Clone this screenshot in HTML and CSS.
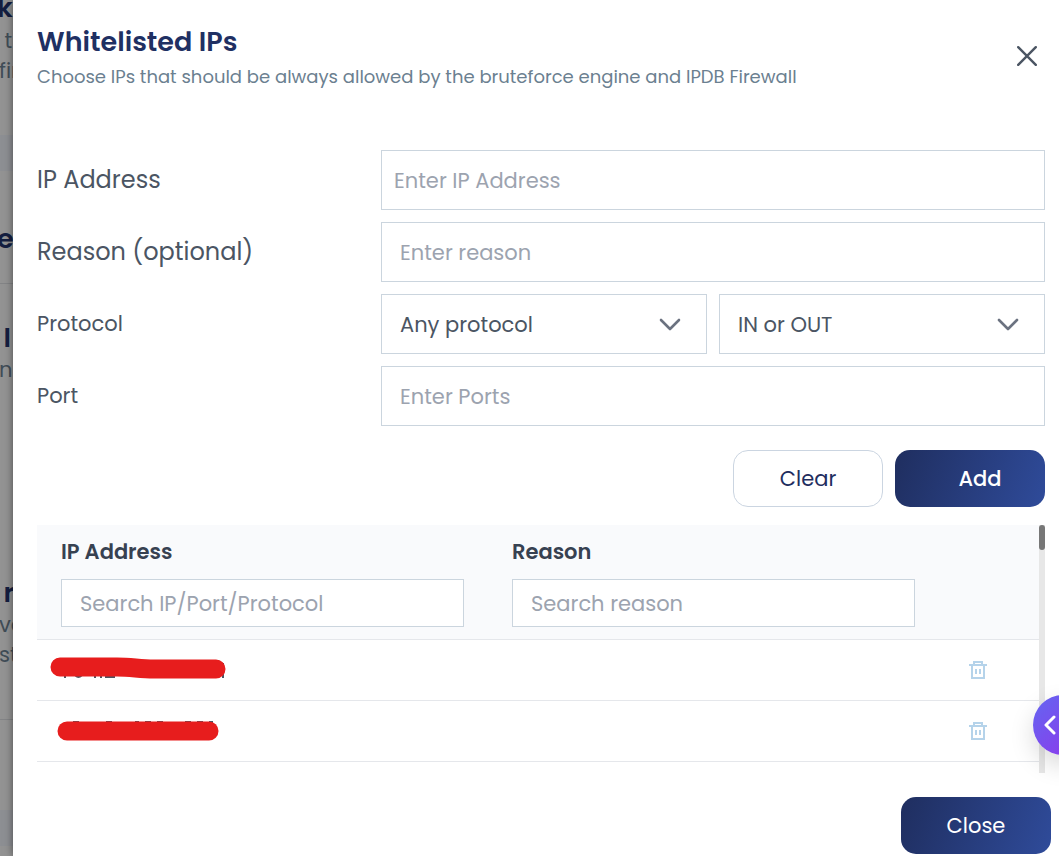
FILE: index.html
```html
<!DOCTYPE html>
<html lang="en">
<head>
  <meta charset="UTF-8">
  <meta name="viewport" content="width=device-width, initial-scale=1.0">
  <link rel="stylesheet" href="styles.css">
  <title>Whitelisted IPs</title>
</head>
<body class="page">
  <!-- settings page, dimmed behind the drawer -->
  <div class="behind" aria-hidden="true">
    <div class="behind__block behind__block_first">
      <p class="behind__title">k</p>
      <p class="behind__text">&nbsp;t</p>
      <p class="behind__text">fir</p>
    </div>
    <div class="behind__band"></div>
    <div class="behind__block behind__block_heading">
      <p class="behind__title">e</p>
    </div>
    <div class="behind__block behind__block_tall">
      <p class="behind__title">&nbsp;I</p>
      <p class="behind__text">n</p>
    </div>
    <div class="behind__block behind__block_last">
      <p class="behind__title">&nbsp;r</p>
      <p class="behind__text">ve</p>
      <p class="behind__text">st</p>
    </div>
    <div class="behind__band"></div>
  </div>

  <main class="drawer">
    <header class="header">
      <div>
        <h1 class="header__title">Whitelisted IPs</h1>
        <p class="header__text">Choose IPs that should be always allowed by the bruteforce engine and IPDB Firewall</p>
      </div>
      <button class="header__close" type="button" aria-label="Close panel">
        <svg width="20" height="20" viewBox="0 0 20 20" fill="none" stroke="currentColor" stroke-width="2.4" stroke-linecap="round">
          <path d="M1.2 1.2L18.8 18.8M18.8 1.2L1.2 18.8"/>
        </svg>
      </button>
    </header>

    <form class="form">
      <label class="label label_size_l" for="ip">IP Address</label>
      <input class="field field_compact" id="ip" type="text" placeholder="Enter IP Address">

      <label class="label label_size_l" for="reason">Reason (optional)</label>
      <input class="field" id="reason" type="text" placeholder="Enter reason">

      <label class="label" for="protocol">Protocol</label>
      <div class="selects">
        <div class="select">
          <select class="field select__field" id="protocol">
            <option>Any protocol</option>
            <option>TCP</option>
            <option>UDP</option>
          </select>
          <svg class="select__arrow" width="22" height="13" viewBox="0 0 22 13" fill="none" stroke="currentColor" stroke-width="2.6" stroke-linecap="round" stroke-linejoin="round">
            <path d="M2 2L11 11L20 2"/>
          </svg>
        </div>
        <div class="select">
          <select class="field select__field" aria-label="Direction">
            <option>IN or OUT</option>
            <option>IN</option>
            <option>OUT</option>
          </select>
          <svg class="select__arrow" width="22" height="13" viewBox="0 0 22 13" fill="none" stroke="currentColor" stroke-width="2.6" stroke-linecap="round" stroke-linejoin="round">
            <path d="M2 2L11 11L20 2"/>
          </svg>
        </div>
      </div>

      <label class="label" for="port">Port</label>
      <input class="field" id="port" type="text" placeholder="Enter Ports">

      <div class="form__buttons">
        <button class="button button_type_secondary" type="reset">Clear</button>
        <button class="button button_add" type="button">Add</button>
      </div>
    </form>

    <section class="list">
      <table class="table">
        <thead>
          <tr>
            <th class="table__head">
              <label class="table__label" for="search-ip">IP Address</label>
              <input class="field field_search" id="search-ip" type="text" placeholder="Search IP/Port/Protocol">
            </th>
            <th class="table__head">
              <label class="table__label" for="search-reason">Reason</label>
              <input class="field field_search" id="search-reason" type="text" placeholder="Search reason">
            </th>
            <th class="table__head table__head_actions"></th>
          </tr>
        </thead>
        <tbody>
          <tr>
            <td class="table__cell table__cell_ip">
              <svg class="redacted" width="200" height="32" viewBox="0 0 200 32" fill="none">
                <path d="M28 20V24M38 21Q41 25 45 21M58 20V24M64 20V24M68 23H78M186 9V24" stroke="#4b5563" stroke-width="2"/>
                <path d="M23 13H80C95 13 102 15 117 15H179" stroke="#e71d1d" stroke-width="19" stroke-linecap="round" stroke-linejoin="round"/>
              </svg>
            </td>
            <td class="table__cell"></td>
            <td class="table__cell table__cell_action">
              <button class="delete" type="button" aria-label="Delete">
                <svg width="18" height="18" viewBox="0 0 18 18" fill="none" stroke="currentColor" stroke-width="2">
                  <path d="M0 4H18M5 4V1H13V4M3 4V17H15V4M7 8V13M11 8V13"/>
                </svg>
              </button>
            </td>
          </tr>
          <tr>
            <td class="table__cell table__cell_ip">
              <svg class="redacted" width="200" height="32" viewBox="0 0 200 32" fill="none">
                <path d="M36 7H42M69 7H75M98 7H102M108 7H114M120 7H126M148 7H154M160 7H166M172 7H176" stroke="#4b5563" stroke-width="2"/>
                <path d="M30 16H172" stroke="#e71d1d" stroke-width="19" stroke-linecap="round"/>
              </svg>
            </td>
            <td class="table__cell"></td>
            <td class="table__cell table__cell_action">
              <button class="delete" type="button" aria-label="Delete">
                <svg width="18" height="18" viewBox="0 0 18 18" fill="none" stroke="currentColor" stroke-width="2">
                  <path d="M0 4H18M5 4V1H13V4M3 4V17H15V4M7 8V13M11 8V13"/>
                </svg>
              </button>
            </td>
          </tr>
        </tbody>
      </table>
      <div class="scrollbar"><div class="scrollbar__thumb"></div></div>
    </section>

    <footer class="footer">
      <button class="button" type="button">Close</button>
    </footer>
  </main>

  <button class="expand" type="button" aria-label="Open side panel">
    <svg width="12" height="20" viewBox="0 0 12 20" fill="none" stroke="currentColor" stroke-width="3" stroke-linecap="round" stroke-linejoin="round">
      <path d="M10 2L2 10L10 18"/>
    </svg>
  </button>
</body>
</html>
```

FILE: styles.css
```css
* {
  box-sizing: border-box;
}

.page {
  margin: 0;
  min-height: 100vh;
  display: flex;
  overflow-x: hidden;
  font-family: Poppins, Inter, sans-serif;
  font-size: 21px;
  background: #939393;
  color: #4b5563;
}

p, h1 {
  margin: 0;
}

input, select, button {
  font: inherit;
}

/* page behind the drawer */

.behind {
  flex: 0 0 13px;
  height: 100vh;
  overflow: hidden;
  white-space: nowrap;
}

.behind__block {
  border-bottom: 1px solid #838486;
}

.behind__block_first {
  height: 135px;
  border-bottom: none;
}

.behind__block_heading {
  height: 113px;
  padding-top: 52px;
}

.behind__block_tall {
  height: 255px;
  padding-top: 38px;
  border-bottom: none;
}

.behind__block_last {
  height: 181px;
  padding-top: 38px;
  margin-bottom: 90px;
}

.behind__title {
  height: 33px;
  line-height: 32px;
  font-size: 27px;
  font-weight: 600;
  text-indent: -3px;
  color: #141e40;
}

.behind__block_first .behind__title {
  height: 26px;
  line-height: 16px;
}

.behind__text {
  line-height: 30px;
  text-indent: -1px;
  color: #414d57;
}

.behind__band {
  height: 36px;
  background: #8d8f93;
}

/* drawer */

.drawer {
  flex: 1;
  min-width: 0;
  padding: 24px 14px 2px 24px;
  background: #fff;
  box-shadow: 0 0 8px rgba(0, 0, 0, 0.5);
}

.header {
  display: flex;
  justify-content: space-between;
  min-height: 126px;
}

.header__title {
  line-height: 36px;
  font-size: 27px;
  font-weight: 600;
  color: #1f3063;
}

.header__text {
  line-height: 34px;
  font-size: 18px;
  color: #6b8090;
}

.header__close {
  align-self: flex-start;
  display: flex;
  padding: 22px 8px;
  border: none;
  background: none;
  color: #4b5563;
}

.form {
  display: grid;
  grid-template-columns: 1fr 2fr;
  gap: 12px;
}

.label {
  line-height: 60px;
}

.label_size_l {
  font-size: 24px;
}

.field {
  width: 100%;
  height: 60px;
  padding: 0 18px;
  border: 1px solid #cbd5de;
  border-radius: 0;
  background: #fff;
  color: #4b5563;
}

.field::placeholder {
  color: #9ca3af;
  opacity: 1;
}

.field_compact {
  padding: 0 12px;
}

.field_search {
  display: block;
  height: 48px;
  font-weight: 400;
}

.selects {
  display: grid;
  grid-template-columns: 1fr 1fr;
  gap: 12px;
}

.select {
  position: relative;
}

.select__field {
  appearance: none;
}

.select__arrow {
  position: absolute;
  top: 24px;
  right: 26px;
  color: #6b7280;
  pointer-events: none;
}

.form__buttons {
  grid-column: 1 / -1;
  display: flex;
  justify-content: flex-end;
  gap: 12px;
  padding: 12px 0 18px;
}

.button {
  width: 150px;
  height: 57px;
  padding: 0;
  border: none;
  border-radius: 15px;
  background: linear-gradient(110deg, #1f2e5f, #2f4b9a);
  color: #fff;
}

.button_type_secondary {
  border: 1px solid #cbd5e1;
  background: #fff;
  color: #1f2e5f;
}

.button_add {
  padding-left: 20px;
  font-weight: 500;
}

/* whitelist */

.list {
  display: flex;
  align-items: flex-start;
  height: 248px;
  overflow: hidden;
}

.table {
  flex: 1;
  width: 100%;
  table-layout: fixed;
  border-collapse: separate;
  border-spacing: 0;
}

.table__head {
  padding: 12px 24px;
  border-bottom: 1px solid #e5e7eb;
  background: #f9fafc;
  text-align: left;
  color: #374151;
}

.table__head_actions {
  width: 100px;
}

.table__label {
  display: block;
  height: 42px;
  line-height: 30px;
  font-weight: 600;
}

.table__cell {
  height: 61px;
  padding: 0 24px;
  border-bottom: 1px solid #e5e7eb;
}

.table__cell_ip {
  padding: 0;
}

.table__cell_action {
  padding: 0 30px;
}

.redacted {
  display: block;
}

.delete {
  display: flex;
  padding: 0;
  border: none;
  background: none;
  color: #b5d3ea;
}

.scrollbar {
  flex: 0 0 6px;
  height: 100%;
  background: #e7e7e7;
}

.scrollbar__thumb {
  height: 25px;
  border-radius: 3px;
  background: #777;
}

.footer {
  display: flex;
  justify-content: flex-end;
  margin: 24px -6px 0 0;
}

/* side panel toggle, half outside the window */

.expand {
  position: fixed;
  right: -34px;
  bottom: 101px;
  display: flex;
  align-items: center;
  width: 60px;
  height: 60px;
  padding: 0 11px;
  border: none;
  border-radius: 50%;
  background: linear-gradient(135deg, #6366f1, #9333ea);
  box-shadow: 0 10px 24px rgba(0, 0, 0, 0.15);
  color: #fff;
}
```
